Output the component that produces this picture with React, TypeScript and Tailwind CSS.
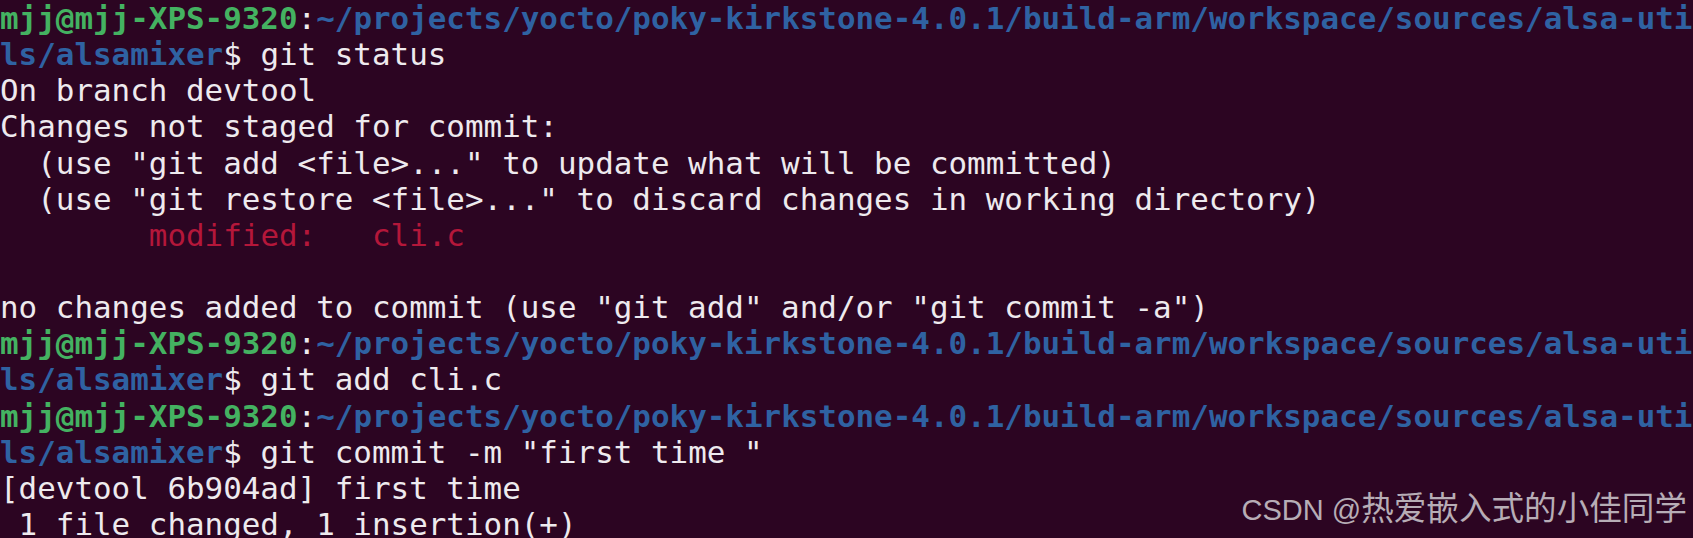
import React from "react";

type Seg = { t: string; c?: "g" | "b" | "r" };

const prompt1: Seg[] = [
  { t: "mjj@mjj-XPS-9320", c: "g" },
  { t: ":" },
  { t: "~/projects/yocto/poky-kirkstone-4.0.1/build-arm/workspace/sources/alsa-uti", c: "b" },
];

const lines: Seg[][] = [
  prompt1,
  [{ t: "ls/alsamixer", c: "b" }, { t: "$ git status" }],
  [{ t: "On branch devtool" }],
  [{ t: "Changes not staged for commit:" }],
  [{ t: '  (use "git add <file>..." to update what will be committed)' }],
  [{ t: '  (use "git restore <file>..." to discard changes in working directory)' }],
  [{ t: "\t" }, { t: "modified:   cli.c", c: "r" }],
  [{ t: " " }],
  [{ t: 'no changes added to commit (use "git add" and/or "git commit -a")' }],
  prompt1,
  [{ t: "ls/alsamixer", c: "b" }, { t: "$ git add cli.c" }],
  prompt1,
  [{ t: "ls/alsamixer", c: "b" }, { t: '$ git commit -m "first time "' }],
  [{ t: "[devtool 6b904ad] first time" }],
  [{ t: " 1 file changed, 1 insertion(+)" }],
];

function Span({ s }: { s: Seg }) {
  if (s.c === "g") return <span className="font-bold text-[#44b261]">{s.t}</span>;
  if (s.c === "b") return <span className="font-bold text-[#2f62a2]">{s.t}</span>;
  if (s.c === "r") return <span className="text-[#b4173a]">{s.t}</span>;
  return <span>{s.t}</span>;
}

export default function App() {
  return (
    <div className="relative w-[1693px] h-[538px] overflow-hidden bg-[#2c0522]">
      <div
        className="text-[30.9px] leading-[36.15px] text-[#eeeaee] whitespace-pre [tab-size:8]"
        style={{ fontFamily: '"DejaVu Sans Mono", "Liberation Mono", monospace' }}
      >
        {lines.map((l, i) => (
          <div key={i} className="h-[36.15px]">
            {l.map((s, j) => <Span key={j} s={s} />)}
          </div>
        ))}
      </div>
      <div
        className="absolute right-[6px] bottom-[13px] flex items-baseline text-[#b7adb6] leading-none"
        style={{ fontFamily: '"Liberation Sans", "Noto Sans CJK SC", sans-serif' }}
      >
        <span className="text-[29px]">CSDN @</span>
        <span className="text-[32.6px]" style={{ fontFamily: '"Noto Sans CJK SC", sans-serif' }}>热爱嵌入式的小佳同学</span>
      </div>
    </div>
  );
}
